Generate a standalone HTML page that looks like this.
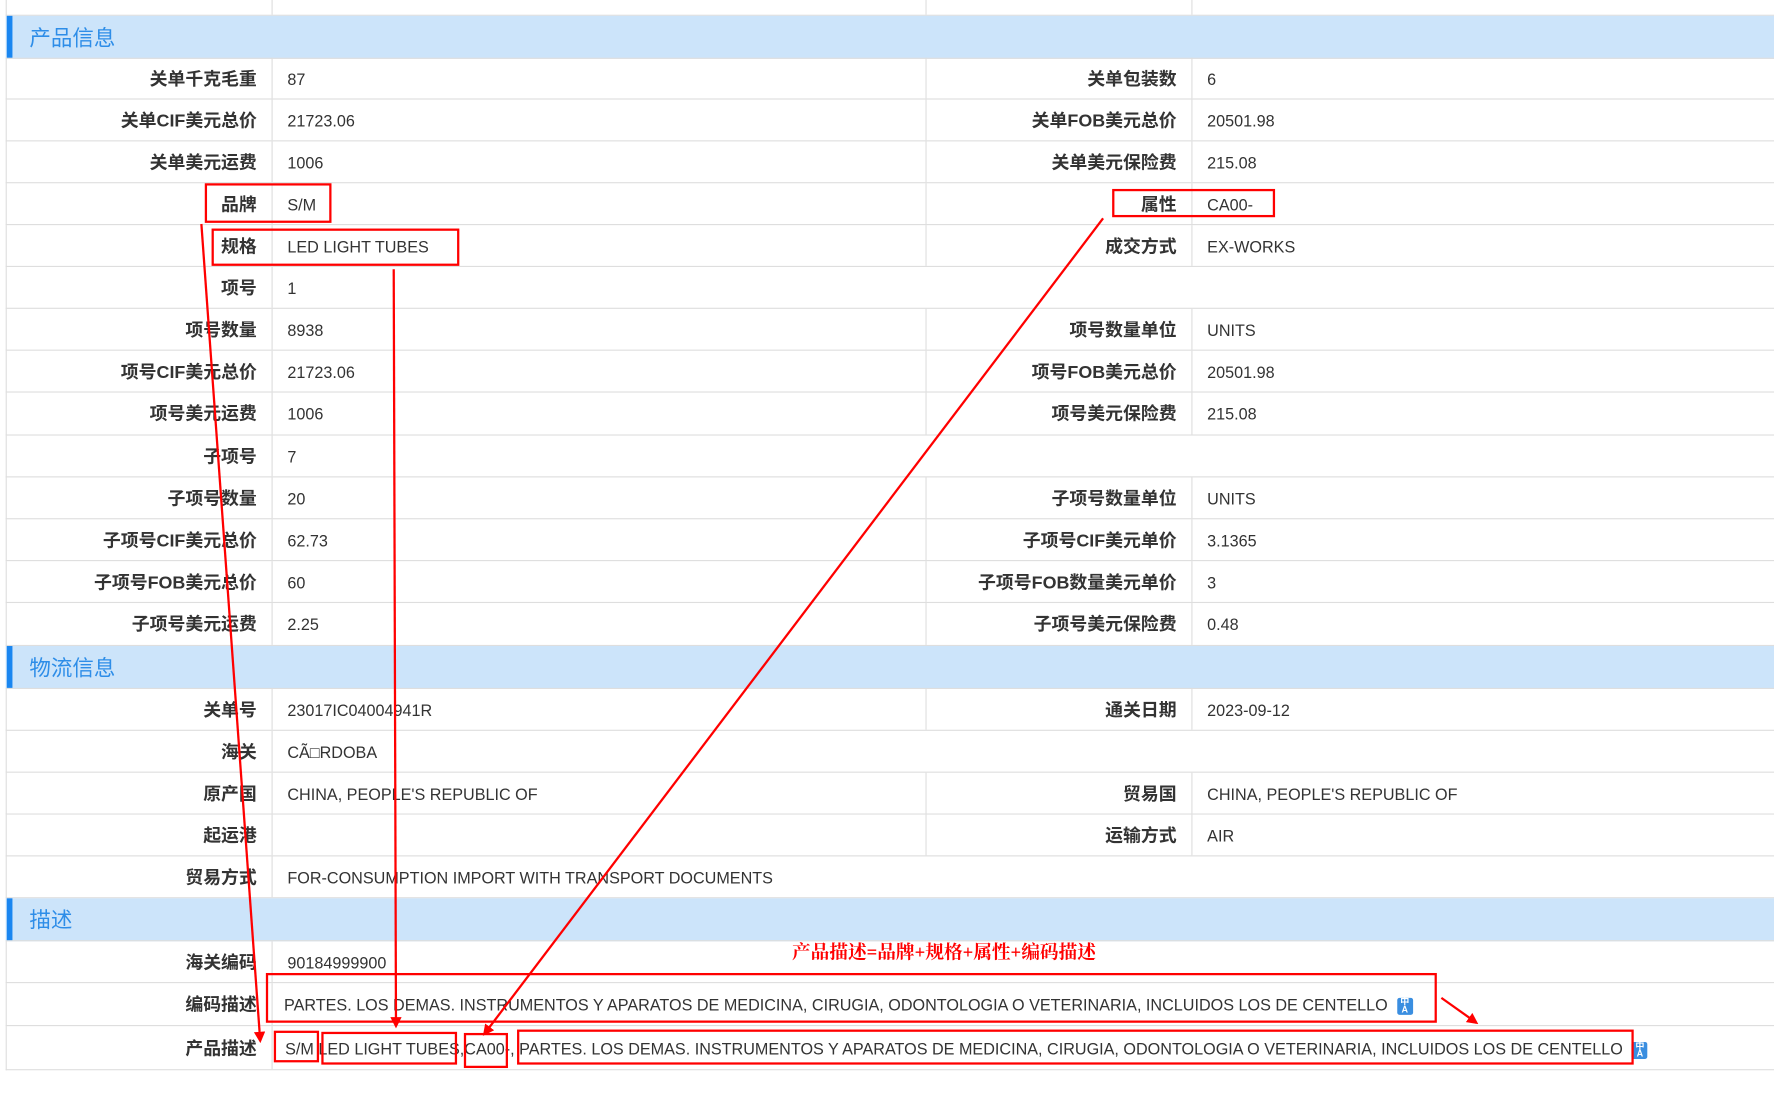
<!DOCTYPE html>
<html><head><meta charset="utf-8">
<style>
html,body{margin:0;padding:0;background:#fff;width:1774px;height:1092px;overflow:hidden}
#w{position:absolute;left:0;top:0;width:1568px;height:966px;transform:scale(1.13138);transform-origin:0 0;font-family:"Liberation Sans","Noto Sans CJK SC",sans-serif;color:#333}
.r{position:absolute;left:5px;width:1563px;border-bottom:1px solid #dedede;border-left:1px solid #dedede;box-sizing:border-box;height:37px}
.c{position:absolute;top:2px;height:100%;line-height:36px;font-size:14.3px;white-space:nowrap}
.l{font-weight:bold;text-align:right;font-size:15.8px}
.l1{left:0;width:221px}
.v1{left:248px}
.l2{left:813px;width:221px}
.v2{left:1061px}
.d1{position:absolute;left:234px;top:0;bottom:0;border-left:1px solid #dedede}
.d2{position:absolute;left:812px;top:0;bottom:0;border-left:1px solid #dedede}
.d3{position:absolute;left:1047px;top:0;bottom:0;border-left:1px solid #dedede}
.s{position:absolute;left:5px;width:1563px;height:38px;background:#cce4fa;border-bottom:1px solid #dedede;box-sizing:border-box}
.s:before{content:"";position:absolute;left:1px;top:0;bottom:0;width:5px;background:#1a86f0}
.s span{position:absolute;left:21px;top:2px;line-height:38px;font-size:19px;color:#2d8de8}
.ic{display:inline-block;width:14px;height:15px;background:#3a8ee0;border-radius:2px;vertical-align:-2px;margin-left:8px;color:#fff;font-size:8px;line-height:7px;text-align:center;font-weight:bold}
</style></head><body><div id="w">
<div class="r" style="top:-23px"><div class="d1"></div><div class="d2"></div><div class="d3"></div><div class="c l l1" style="top:-12px">进口商地址</div><div class="c l l2" style="top:-12px">进口商电话</div></div>
<div class="s" style="top:14px"><span>产品信息</span></div>

<div class="r" style="top:51px"><div class="d1"></div><div class="d2"></div><div class="d3"></div><div class="c l l1">关单千克毛重</div><div class="c v1">87</div><div class="c l l2">关单包装数</div><div class="c v2">6</div></div>
<div class="r" style="top:88px"><div class="d1"></div><div class="d2"></div><div class="d3"></div><div class="c l l1">关单CIF美元总价</div><div class="c v1">21723.06</div><div class="c l l2">关单FOB美元总价</div><div class="c v2">20501.98</div></div>
<div class="r" style="top:125px"><div class="d1"></div><div class="d2"></div><div class="d3"></div><div class="c l l1">关单美元运费</div><div class="c v1">1006</div><div class="c l l2">关单美元保险费</div><div class="c v2">215.08</div></div>
<div class="r" style="top:162px"><div class="d1"></div><div class="d2"></div><div class="d3"></div><div class="c l l1">品牌</div><div class="c v1">S/M</div><div class="c l l2">属性</div><div class="c v2">CA00-</div></div>
<div class="r" style="top:199px"><div class="d1"></div><div class="d2"></div><div class="d3"></div><div class="c l l1">规格</div><div class="c v1">LED LIGHT TUBES</div><div class="c l l2">成交方式</div><div class="c v2">EX-WORKS</div></div>
<div class="r" style="top:236px"><div class="d1"></div><div class="c l l1">项号</div><div class="c v1">1</div></div>
<div class="r" style="top:273px"><div class="d1"></div><div class="d2"></div><div class="d3"></div><div class="c l l1">项号数量</div><div class="c v1">8938</div><div class="c l l2">项号数量单位</div><div class="c v2">UNITS</div></div>
<div class="r" style="top:310px"><div class="d1"></div><div class="d2"></div><div class="d3"></div><div class="c l l1">项号CIF美元总价</div><div class="c v1">21723.06</div><div class="c l l2">项号FOB美元总价</div><div class="c v2">20501.98</div></div>
<div class="r" style="top:347px;height:38px"><div class="d1"></div><div class="d2"></div><div class="d3"></div><div class="c l l1">项号美元运费</div><div class="c v1">1006</div><div class="c l l2">项号美元保险费</div><div class="c v2">215.08</div></div>
<div class="r" style="top:385px"><div class="d1"></div><div class="c l l1">子项号</div><div class="c v1">7</div></div>
<div class="r" style="top:422px"><div class="d1"></div><div class="d2"></div><div class="d3"></div><div class="c l l1">子项号数量</div><div class="c v1">20</div><div class="c l l2">子项号数量单位</div><div class="c v2">UNITS</div></div>
<div class="r" style="top:459px"><div class="d1"></div><div class="d2"></div><div class="d3"></div><div class="c l l1">子项号CIF美元总价</div><div class="c v1">62.73</div><div class="c l l2">子项号CIF美元单价</div><div class="c v2">3.1365</div></div>
<div class="r" style="top:496px"><div class="d1"></div><div class="d2"></div><div class="d3"></div><div class="c l l1">子项号FOB美元总价</div><div class="c v1">60</div><div class="c l l2">子项号FOB数量美元单价</div><div class="c v2">3</div></div>
<div class="r" style="top:533px;height:38px"><div class="d1"></div><div class="d2"></div><div class="d3"></div><div class="c l l1">子项号美元运费</div><div class="c v1">2.25</div><div class="c l l2">子项号美元保险费</div><div class="c v2">0.48</div></div>

<div class="s" style="top:571px"><span>物流信息</span></div>
<div class="r" style="top:609px"><div class="d1"></div><div class="d2"></div><div class="d3"></div><div class="c l l1">关单号</div><div class="c v1">23017IC04004941R</div><div class="c l l2">通关日期</div><div class="c v2">2023-09-12</div></div>
<div class="r" style="top:646px"><div class="d1"></div><div class="c l l1">海关</div><div class="c v1">CÃ□RDOBA</div></div>
<div class="r" style="top:683px"><div class="d1"></div><div class="d2"></div><div class="d3"></div><div class="c l l1">原产国</div><div class="c v1">CHINA, PEOPLE'S REPUBLIC OF</div><div class="c l l2">贸易国</div><div class="c v2">CHINA, PEOPLE'S REPUBLIC OF</div></div>
<div class="r" style="top:720px"><div class="d1"></div><div class="d2"></div><div class="d3"></div><div class="c l l1">起运港</div><div class="c v1"></div><div class="c l l2">运输方式</div><div class="c v2">AIR</div></div>
<div class="r" style="top:757px;height:37px"><div class="d1"></div><div class="c l l1">贸易方式</div><div class="c v1">FOR-CONSUMPTION IMPORT WITH TRANSPORT DOCUMENTS</div></div>

<div class="s" style="top:794px"><span>描述</span></div>
<div class="r" style="top:832px"><div class="d1"></div><div class="c l l1">海关编码</div><div class="c v1">90184999900</div></div>
<div class="r" style="top:869px;height:38px"><div class="d1"></div><div class="c l l1">编码描述</div><div class="c" style="left:245px">PARTES. LOS DEMAS. INSTRUMENTOS Y APARATOS DE MEDICINA, CIRUGIA, ODONTOLOGIA O VETERINARIA, INCLUIDOS LOS DE CENTELLO<span class="ic">中<br>A</span></div></div>
<div class="r" style="top:907px;height:39px"><div class="d1"></div><div class="c l l1" style="line-height:38px">产品描述</div><div class="c" style="left:246px;line-height:38px">S/M LED LIGHT TUBES,CA00-, PARTES. LOS DEMAS. INSTRUMENTOS Y APARATOS DE MEDICINA, CIRUGIA, ODONTOLOGIA O VETERINARIA, INCLUIDOS LOS DE CENTELLO<span class="ic">中<br>A</span></div></div>

<div style="position:absolute;left:700px;top:828px;font-family:'Liberation Serif','Noto Serif CJK SC',serif;font-size:16.5px;color:#f00;font-weight:bold">产品描述=品牌+规格+属性+编码描述</div>

<svg style="position:absolute;left:0;top:0" width="1568" height="966">
<defs><marker id="a" markerWidth="10" markerHeight="10" refX="8" refY="5" orient="auto" markerUnits="userSpaceOnUse"><path d="M0,0 L10,5 L0,10z" fill="#f00"/></marker></defs>
<g fill="none" stroke="#f00" stroke-width="2">
<rect x="182" y="163" width="110" height="33"/>
<rect x="188" y="203" width="217" height="31"/>
<rect x="984" y="168" width="142" height="23"/>
<rect x="236" y="861" width="1033" height="42"/>
<rect x="243" y="912" width="38" height="26"/>
<rect x="285" y="913" width="118" height="27"/>
<rect x="411" y="914" width="37" height="29"/>
<rect x="458" y="911" width="985" height="29"/>
<line x1="178" y1="198" x2="230" y2="920" marker-end="url(#a)"/>
<line x1="348" y1="238" x2="350" y2="907" marker-end="url(#a)"/>
<line x1="975" y1="193" x2="428" y2="914" marker-end="url(#a)"/>
<line x1="1274" y1="882" x2="1305" y2="904" marker-end="url(#a)"/>
</g></svg>
</div></body></html>
